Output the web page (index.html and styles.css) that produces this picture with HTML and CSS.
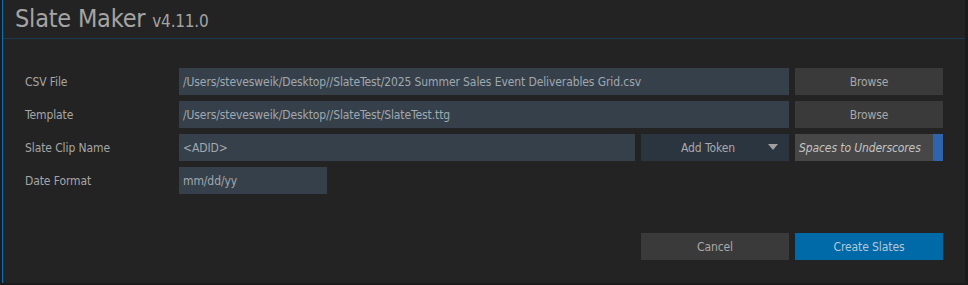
FILE: index.html
```html
<!DOCTYPE html>
<html lang="en">
<head>
    <meta charset="UTF-8">
    <title>Slate Maker</title>
    <link rel="stylesheet" href="styles.css">
</head>
<body>
    <div class="window">
        <div class="header">
            <h1>Slate Maker <span class="version">v4.11.0</span></h1>
        </div>

        <div class="form">
            <label class="label">CSV File</label>
            <div class="field wide">/Users/stevesweik/Desktop//SlateTest/2025 Summer Sales Event Deliverables Grid.csv</div>
            <button class="btn">Browse</button>

            <label class="label">Template</label>
            <div class="field wide">/Users/stevesweik/Desktop//SlateTest/SlateTest.ttg</div>
            <button class="btn">Browse</button>

            <label class="label">Slate Clip Name</label>
            <div class="field">&lt;ADID&gt;</div>
            <button class="btn dropdown">Add Token <span class="arrow"></span></button>
            <div class="toggle">Spaces to Underscores</div>

            <label class="label">Date Format</label>
            <div class="field short">mm/dd/yy</div>

            <div class="actions">
                <button class="btn">Cancel</button>
                <button class="btn primary">Create Slates</button>
            </div>
        </div>
    </div>
</body>
</html>
```

FILE: styles.css
```css
* {
    margin: 0;
    padding: 0;
    box-sizing: border-box;
}

body {
    background: #1b1b1b;
    font-family: 'DejaVu Sans Condensed', 'DejaVu Sans', sans-serif;
    color: #a8a8a8;
    height: 285px;
    overflow: hidden;
}

.window {
    margin-left: 2px;
    width: 963px;
    height: 283px;
    background: #232323;
    border-left: 1px solid #0a70b8;
}

.header {
    height: 39px;
    border-bottom: 1px solid #1b3a50;
    padding-left: 12px;
}

h1 {
    font-weight: normal;
    font-size: 25px;
    line-height: 37px;
    letter-spacing: -0.2px;
    color: #a4a4a4;
}

.version {
    font-size: 17px;
}

.form {
    display: grid;
    grid-template-columns: 148px 456px 148px 148px;
    grid-template-rows: repeat(4, 27px) 60px;
    gap: 6px;
    padding: 29px 0 0 22px;
    font-size: 12px;
    letter-spacing: -0.1px;
}

.label {
    display: flex;
    align-items: center;
    grid-column: 1;
    color: #a6a6a6;
}

.field {
    display: flex;
    align-items: center;
    padding-left: 4px;
    background: #36404a;
    color: #a0a8b0;
    white-space: nowrap;
}

.field.wide {
    grid-column: span 2;
}

.field.short {
    grid-column: 2;
    width: 148px;
}

.btn {
    border: none;
    background: #3a3a3a;
    color: #a9a9a9;
    font-family: inherit;
    font-size: 12px;
    letter-spacing: -0.1px;
}

.dropdown {
    background: #2b3540;
    position: relative;
    padding-right: 14px;
}

.arrow {
    position: absolute;
    right: 11px;
    top: 10px;
    width: 0;
    height: 0;
    border-left: 5px solid transparent;
    border-right: 5px solid transparent;
    border-top: 6px solid #a0a0a0;
}

.toggle {
    display: flex;
    align-items: center;
    padding-left: 4px;
    background: #474747;
    border-right: 10px solid #2f63ae;
    font-style: italic;
    color: #c4c4c4;
    white-space: nowrap;
}

.actions {
    grid-column: 3 / span 2;
    grid-row: 5;
    align-self: end;
    display: grid;
    grid-template-columns: 148px 148px;
    grid-auto-rows: 27px;
    gap: 6px;
}

.primary {
    background: #0069a8;
    color: #b4c8d8;
}
```
